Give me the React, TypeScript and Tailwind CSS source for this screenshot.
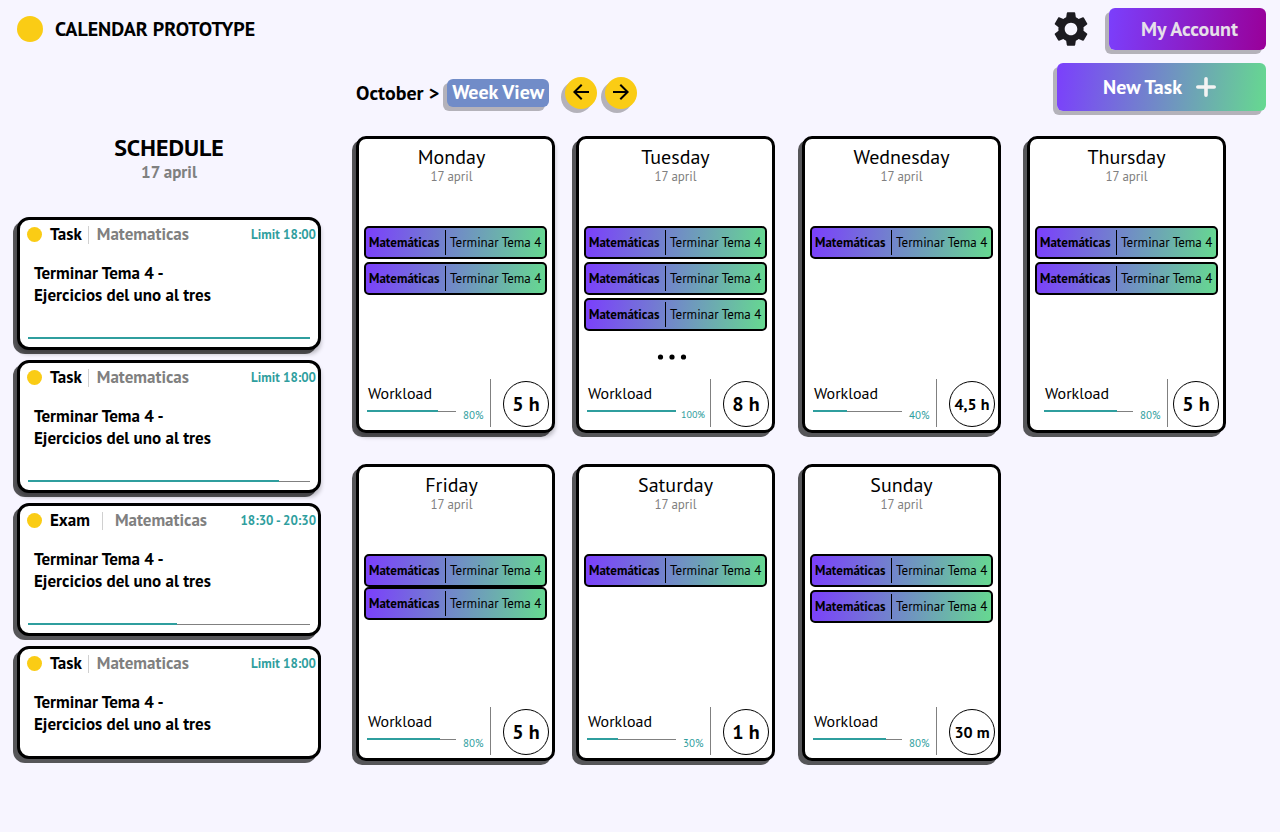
import React from "react";
import { MdSettings } from "react-icons/md";

type ScheduleItem = {
  kind: string;
  subject: string;
  time: string;
  progress?: number;
  lifted?: boolean;
};

type Day = {
  name: string;
  tasks: number;
  more?: boolean;
  tight?: boolean;
  lifted?: boolean;
  inset?: boolean;
  workload: number;
  fill: number;
  hours: string;
};

const schedule: ScheduleItem[] = [
  { kind: "Task", subject: "Matematicas", time: "Limit 18:00", progress: 100, lifted: true },
  { kind: "Task", subject: "Matematicas", time: "Limit 18:00", progress: 89, lifted: true },
  { kind: "Exam", subject: "Matematicas", time: "18:30 - 20:30", progress: 53 },
  { kind: "Task", subject: "Matematicas", time: "Limit 18:00" },
];

const days: Day[] = [
  { name: "Monday", tasks: 2, workload: 80, fill: 80, hours: "5 h", lifted: true },
  { name: "Tuesday", tasks: 3, more: true, workload: 100, fill: 100, hours: "8 h" },
  { name: "Wednesday", tasks: 1, workload: 40, fill: 38, hours: "4,5 h" },
  { name: "Thursday", tasks: 2, workload: 80, fill: 82, hours: "5 h", inset: true },
  { name: "Friday", tasks: 2, tight: true, workload: 80, fill: 82, hours: "5 h" },
  { name: "Saturday", tasks: 1, workload: 30, fill: 35, hours: "1 h" },
  { name: "Sunday", tasks: 2, workload: 80, fill: 82, hours: "30 m" },
];

const flatShadow = "shadow-[-4px_4px_0_rgba(0,0,0,0.65)]";
const liftedShadow = "shadow-[-4px_4px_0_rgba(0,0,0,0.65),0_4px_4px_rgba(0,0,0,0.25)]";
const softShadow = "shadow-[-4px_4px_0_rgba(0,0,0,0.27)]";

function Progress({ fill, label }: { fill: number; label: string }) {
  return (
    <div
      role="progressbar"
      aria-label={label}
      aria-valuenow={fill}
      className="flex h-0.5 w-full items-end"
    >
      <div className="h-0.5 bg-[#2f9e9e]" style={{ width: `${fill}%` }} />
      <div className="h-px flex-1 bg-[#808080]" />
    </div>
  );
}

function ScheduleCard({ item }: { item: ScheduleItem }) {
  const exam = item.kind === "Exam";
  return (
    <article
      className={`flex flex-col rounded-xl border-[3px] border-black bg-white ${
        item.progress === undefined ? "h-[113px]" : "h-[133px]"
      } ${item.lifted ? liftedShadow : flatShadow}`}
    >
      <header className="flex h-[30px] items-center pr-0.5 pl-[7px]">
        <span className="mb-0.5 size-[15px] rounded-full bg-[#facc15]" />
        <span className="ml-2 text-[17px] font-bold">{item.kind}</span>
        <span className={`h-[18px] w-px bg-[#d0d0d0] ${exam ? "mx-3" : "mr-2 ml-1.5"}`} />
        <span className="text-[17px] font-bold text-[#808080]">{item.subject}</span>
        <span className="ml-auto text-[13px] font-bold text-[#2f9e9e]">{item.time}</span>
      </header>
      <p className="mt-3 pl-3.5 text-[17px] leading-[22px] font-bold">
        Terminar Tema 4 -<br />
        Ejercicios del uno al tres
      </p>
      {item.progress !== undefined && (
        <div className="mt-auto px-2 pb-2">
          <Progress fill={item.progress} label="Task progress" />
        </div>
      )}
    </article>
  );
}

function DayCard({ day, leading }: { day: Day; leading: boolean }) {
  return (
    <article
      className={`flex h-[297px] w-[199px] flex-col rounded-[10px] border-[3px] border-black bg-white ${
        day.lifted ? liftedShadow : flatShadow
      }`}
    >
      <header className={`h-[87px] shrink-0 pt-1.5 text-center ${leading ? "pr-2" : ""}`}>
        <h3 className="text-[20px] leading-6">{day.name}</h3>
        <p className="text-[13px] leading-4 text-[#808080]">17 april</p>
      </header>
      <ul className={`flex flex-col px-[5px] ${day.tight ? "" : "gap-[3px]"}`}>
        {Array.from({ length: day.tasks }, (_, i) => (
          <li
            key={i}
            className="flex h-[33px] items-center rounded-[5px] border-2 border-black bg-[linear-gradient(97deg,#7b3ffc,#66d990)] text-[13px] whitespace-nowrap"
          >
            <span className="w-[79px] pl-[3px] font-bold">Matemáticas</span>
            <span className="h-[25px] w-px bg-black" />
            <span className="pl-1">Terminar Tema 4</span>
          </li>
        ))}
      </ul>
      {day.more && (
        <div className="flex justify-center pt-[23px] pr-2">
          <svg role="img" aria-label="More tasks" viewBox="0 0 30 6" className="h-1.5 w-[30px]">
            <circle cx="3.5" cy="3" r="2.6" />
            <circle cx="15" cy="3" r="2.6" />
            <circle cx="26.5" cy="3" r="2.6" />
          </svg>
        </div>
      )}
      <footer className="mt-auto flex h-[51px] shrink-0 items-start">
        <div className={`flex flex-col ${day.inset ? "w-[137px] pl-3.5" : "w-[131px] pl-2"}`}>
          <span className="pt-1 pl-px text-[16px] leading-5">Workload</span>
          <div className="flex items-start">
            <div className="w-[89px] shrink-0 pt-[7px]">
              <Progress fill={day.fill} label={`${day.name} workload`} />
            </div>
            <span
              className={`pt-1 leading-4 text-[#2f9e9e] ${
                day.workload === 100 ? "pl-[5px] text-[10px]" : "pl-[7px] text-[11px]"
              }`}
            >
              {day.workload}%
            </span>
          </div>
        </div>
        <span className="h-12 w-px bg-[#808080]" />
        <span
          className={`mt-0.5 flex size-[46px] items-center justify-center rounded-full border border-black font-bold whitespace-nowrap ${
            day.inset ? "ml-[5px]" : "ml-3"
          } ${day.hours.length > 3 ? "text-base" : "text-[20px]"}`}
        >
          {day.hours}
        </span>
      </footer>
    </article>
  );
}

function ArrowButton({ label, path }: { label: string; path: string }) {
  return (
    <button
      type="button"
      aria-label={label}
      className={`flex size-8 items-center justify-center rounded-full bg-[#facc15] pb-0.5 ${softShadow}`}
    >
      <svg viewBox="0 0 24 24" className="size-6" fill="black">
        <path d={path} />
      </svg>
    </button>
  );
}

export default function App() {
  return (
    <div className="min-h-screen bg-[#f7f5ff] font-['PT_Sans','Lato',sans-serif] text-black">
      <header className="flex h-[50px] items-center pt-2 pr-3.5 pl-[17px]">
        <span className="size-[26px] rounded-full bg-[#facc15]" />
        <h1 className="ml-3 text-[20px] font-bold">CALENDAR PROTOTYPE</h1>
        <button type="button" aria-label="Settings" className="mr-[17px] ml-auto">
          <MdSettings className="size-[42px] text-[#1c1b20]" />
        </button>
        <button
          type="button"
          className={`h-[42px] w-[157px] rounded-md bg-[linear-gradient(97deg,#7b3ffc,#990099)] pl-1 text-[20px] font-bold text-[#e6e0e9] ${softShadow}`}
        >
          My Account
        </button>
      </header>

      <div className="mt-[13px] flex h-12 items-center pr-3.5 pl-[356px]">
        <nav aria-label="Calendar view" className="flex items-center pt-3">
          <span className="text-[20px] font-bold">October &gt;</span>
          <button
            type="button"
            className={`ml-2 flex h-7 w-[102px] items-center justify-center rounded-md bg-[#718cc8] pb-0.5 text-[20px] font-bold text-white ${softShadow}`}
          >
            Week View
          </button>
          <div className="ml-4 flex gap-2">
            <ArrowButton
              label="Previous week"
              path="m7.825 13 5.6 5.6L12 20l-8-8 8-8 1.425 1.4-5.6 5.6H20v2Z"
            />
            <ArrowButton
              label="Next week"
              path="M16.175 13H4v-2h12.175l-5.6-5.6L12 4l8 8-8 8-1.425-1.4Z"
            />
          </div>
        </nav>
        <button
          type="button"
          className={`ml-auto flex h-12 w-[209px] items-center justify-center gap-3.5 rounded-md bg-[linear-gradient(97deg,#7b3ffc,#66d990)] pr-1 text-[20px] font-bold text-white ${softShadow}`}
        >
          New Task
          <svg viewBox="0 0 20 20" className="size-5" stroke="#f3f3f3" strokeWidth="3.6" strokeLinecap="round">
            <path d="M10 1.8v16.4M1.8 10h16.4" />
          </svg>
        </button>
      </div>

      <main className="flex pt-[25px] pr-[54px] pb-12 pl-[17px]">
        <aside className="w-[304px] shrink-0">
          <div className="h-[81px] text-center">
            <h2 className="text-[24px] leading-6 font-bold">SCHEDULE</h2>
            <p className="text-[17px] leading-6 font-bold text-[#808080]">17 april</p>
          </div>
          <div className="flex flex-col gap-2.5">
            {schedule.map((item, i) => (
              <ScheduleCard key={i} item={item} />
            ))}
          </div>
        </aside>
        <section
          aria-label="Week"
          className="ml-[35px] grid flex-1 grid-cols-[220fr_226fr_225fr_199fr] content-start gap-y-[31px]"
        >
          {days.map((day, i) => (
            <DayCard key={day.name} day={day} leading={i % 4 === 0} />
          ))}
        </section>
      </main>
    </div>
  );
}
